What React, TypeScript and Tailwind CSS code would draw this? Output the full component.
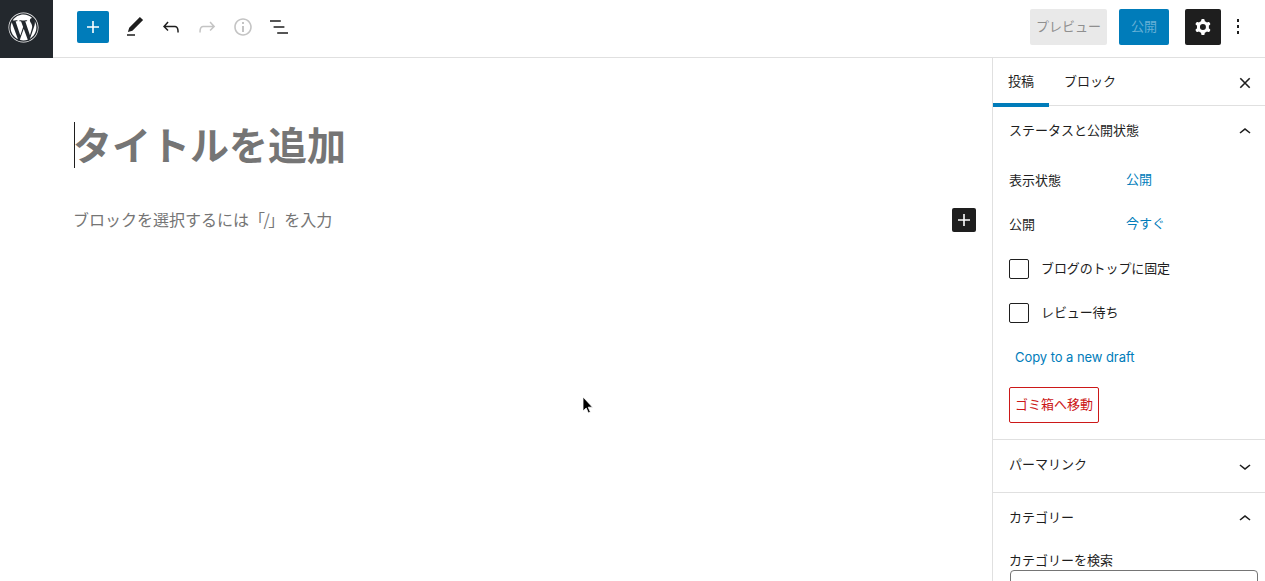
import { FaWordpress } from "react-icons/fa";

const font = { fontFamily: '"Noto Sans CJK JP", sans-serif' };

function Icon({ d, className, size = 24 }: { d: string; className?: string; size?: number }) {
  return (
    <svg viewBox="0 0 24 24" width={size} height={size} className={className} fill="currentColor">
      <path d={d} fillRule="evenodd" />
    </svg>
  );
}

const plus = "M18 11.2h-5.2V6h-1.6v5.2H6v1.6h5.2V18h1.6v-5.2H18z";
const up = "M6.5 12.4L12 8l5.5 4.4-.9 1.2L12 10l-4.5 3.6-1-1.2z";
const down = "M17.5 11.6L12 16l-5.5-4.4.9-1.2L12 14l4.5-3.6 1 1.2z";

function SectionHead({ label, open }: { label: string; open?: boolean }) {
  return (
    <div className="flex items-center justify-between h-[52px] pl-4 pr-2 text-[13px] text-[#1e1e1e]">
      <span className="-mt-[5px]">{label}</span>
      <Icon d={open ? up : down} className={open ? "-mt-[1px]" : ""} />
    </div>
  );
}

function Row({ label, value }: { label: string; value: string }) {
  return (
    <div className="flex items-center h-[44px] text-[13px]">
      <span className="w-[118px] text-[#1e1e1e] -mt-[2px]">{label}</span>
      <span className="text-[#007cba] -mt-[4px] -ml-[1px]">{value}</span>
    </div>
  );
}

function Check({ label }: { label: string }) {
  return (
    <div className="flex items-center h-[44px] text-[13px] text-[#1e1e1e]">
      <span className="w-[20px] h-[20px] border border-[#1e1e1e] rounded-[2px] bg-white" />
      <span className="ml-[12px] -mt-[2px] tracking-[-0.1px]">{label}</span>
    </div>
  );
}

export default function App() {
  return (
    <div className="relative w-[1265px] h-[581px] overflow-hidden bg-white flex flex-col" style={font}>
      <header className="flex items-center h-[58px] shrink-0 border-b border-[#e0e0e0]">
        <div className="w-[53px] h-[58px] bg-[#23282d] flex items-center justify-center text-white">
          <FaWordpress size={31} className="-mt-[3px] -ml-[6px]" />
        </div>
        <div className="flex items-center ml-[24px] -mt-[4px]">
          <div className="w-[32px] h-[32px] rounded-[2px] bg-[#007cba] text-white flex items-center justify-center">
            <Icon d={plus} />
          </div>
          <Icon d="M20.1 5.1L16.9 2 6.2 12.7l-1.3 4.4 4.5-1.3L20.1 5.1zM4 20.8h8v-1.5H4v1.5z" className="ml-[14px] text-[#1e1e1e]" />
          <Icon d="M18.3 11.7c-.6-.6-1.4-.9-2.3-.9H6.7l2.9-3.3-1.1-1-4.5 5L8.5 16l1-1-2.7-2.7H16c.5 0 .9.2 1.3.5 1 1 1 3.4 1 4.5v.3h1.5v-.2c0-1.5 0-4.3-1.5-5.7z" className="ml-[12px] text-[#1e1e1e]" />
          <Icon d="M15.6 6.5l-1.1 1 2.9 3.3H8c-.9 0-1.7.3-2.3.9-1.4 1.5-1.4 4.2-1.4 5.6v.2h1.5v-.3c0-1.1 0-3.5 1-4.5.3-.3.7-.5 1.3-.5h9.2L14.5 15l1.1 1.1 4.6-4.6-4.6-5z" className="ml-[12px] text-[#c4c4c4]" />
          <Icon d="M12 3.2c-4.8 0-8.8 3.9-8.8 8.8 0 4.8 3.9 8.8 8.8 8.8 4.8 0 8.8-3.9 8.8-8.8 0-4.8-4-8.8-8.8-8.8zm0 16c-4 0-7.2-3.3-7.2-7.2C4.8 8 8 4.8 12 4.8s7.2 3.3 7.2 7.2c0 4-3.2 7.2-7.2 7.2zM11 17h2v-6h-2v6zm0-8h2V7h-2v2z" className="ml-[12px] text-[#c4c4c4]" />
          <Icon d="M13.8 5.2H3v1.5h10.8V5.2zm-3.6 12v1.5H21v-1.5H10.2zm7.2-6H6.6v1.5h10.8v-1.5z" className="ml-[12px] text-[#1e1e1e]" />
        </div>
        <div className="ml-auto flex items-center -mt-[4px]">
          <div className="w-[77px] h-[36px] rounded-[2px] bg-[#e9e9e9] text-[#8f8f8f] text-[13px] flex items-center justify-center"><span className="-mt-[2px]">プレビュー</span></div>
          <div className="ml-[12px] w-[50px] h-[36px] rounded-[2px] bg-[#007cba] text-[#66b0d6] text-[13px] flex items-center justify-center"><span className="-mt-[2px]">公開</span></div>
          <div className="ml-[16px] w-[36px] h-[36px] rounded-[2px] bg-[#1e1e1e] text-white flex items-center justify-center">
            <svg viewBox="0 0 24 24" width="24" height="24" fill="currentColor">
              <path fillRule="evenodd" clipRule="evenodd" d="M10.289 4.836A1 1 0 0111.275 4h1.306a1 1 0 01.987.836l.244 1.466c.787.26 1.503.679 2.108 1.218l1.393-.522a1 1 0 011.216.437l.653 1.13a1 1 0 01-.23 1.273l-1.148.944a6.025 6.025 0 010 2.435l1.149.946a1 1 0 01.23 1.272l-.653 1.13a1 1 0 01-1.216.437l-1.394-.522c-.605.54-1.32.958-2.108 1.218l-.244 1.466a1 1 0 01-.987.836h-1.306a1 1 0 01-.986-.836l-.244-1.466a5.995 5.995 0 01-2.108-1.218l-1.394.522a1 1 0 01-1.217-.436l-.653-1.131a1 1 0 01.23-1.272l1.149-.946a6.026 6.026 0 010-2.435l-1.148-.944a1 1 0 01-.23-1.272l.653-1.131a1 1 0 011.217-.437l1.393.522a5.994 5.994 0 012.108-1.218l.244-1.466zM14.929 12a3 3 0 11-6 0 3 3 0 016 0z" />
            </svg>
          </div>
          <div className="ml-[5px] mr-[15px] w-[24px] flex flex-col items-center gap-[3.5px]">
            <span className="w-[2.5px] h-[2.5px] bg-[#1e1e1e]" />
            <span className="w-[2.5px] h-[2.5px] bg-[#1e1e1e]" />
            <span className="w-[2.5px] h-[2.5px] bg-[#1e1e1e]" />
          </div>
        </div>
      </header>

      <div className="flex flex-1 min-h-0">
        <main className="flex-1 min-w-0 pl-[73px] pr-[16px]">
          <div className="mt-[64px] h-[46px] flex items-center border-l border-[#1e1e1e] ml-[1px]">
            <h1 className="text-[39px] leading-[46px] font-bold text-[#757575] whitespace-nowrap -mt-[5px] -ml-[2px]">タイトルを追加</h1>
          </div>
          <div className="mt-[40px] flex items-center justify-between h-[24px]">
            <p className="text-[16px] text-[#757575] -mt-[2px]">ブロックを選択するには「<span className="-mx-[1.5px]">/</span>」を入力</p>
            <div className="w-[24px] h-[24px] rounded-[2px] bg-[#1e1e1e] text-white flex items-center justify-center">
              <Icon d={plus} />
            </div>
          </div>
        </main>

        <aside className="w-[273px] shrink-0 border-l border-[#e0e0e0]">
          <div className="flex items-center h-[48px] border-b border-[#e0e0e0] text-[13px] text-[#1e1e1e]">
            <div className="relative w-[56px] h-[48px] flex items-center justify-center">
              <span className="-mt-[2px]">投稿</span>
              <span className="absolute left-0 right-0 bottom-[-1px] h-[4px] bg-[#007cba]" />
            </div>
            <div className="w-[82px] flex items-center justify-center -mt-[2px]">ブロック</div>
            <svg viewBox="0 0 12 12" width="12" height="12" className="ml-auto mr-[14px] mt-[2px] text-[#1e1e1e]" fill="none" stroke="currentColor" strokeWidth="1.6">
              <path d="M1.3 1.3 10.7 10.7M10.7 1.3 1.3 10.7" />
            </svg>
          </div>

          <section className="border-b border-[#e0e0e0] h-[334px]">
            <SectionHead label="ステータスと公開状態" open />
            <div className="pl-4 pt-[1px]">
              <Row label="表示状態" value="公開" />
              <Row label="公開" value="今すぐ" />
              <Check label="ブログのトップに固定" />
              <Check label="レビュー待ち" />
              <div className="h-[44px] flex items-center pl-[6px] text-[13px] tracking-[-0.06px] text-[#007cba]" style={{ fontFamily: 'Inter, "Noto Sans CJK JP", sans-serif' }}><span className="mt-[1px]">Copy to a new draft</span></div>
              <div className="mt-[8px] w-[90px] h-[36px] rounded-[2px] border border-[#cc1818] text-[#cc1818] text-[13px] flex items-center justify-center"><span className="-mt-[2px]">ゴミ箱へ移動</span></div>
            </div>
          </section>

          <section className="border-b border-[#e0e0e0]">
            <SectionHead label="パーマリンク" />
          </section>

          <section>
            <SectionHead label="カテゴリー" open />
            <div className="pl-4 pr-[7px] pt-[6px] text-[13px] text-[#1e1e1e]">
              <div className="leading-[18px]">カテゴリーを検索</div>
              <div className="mt-[1px] ml-[1px] h-[30px] border border-[#757575] rounded-[4px] bg-white" />
            </div>
          </section>
        </aside>
      </div>

      <svg viewBox="0 0 14 20" width="14" height="20" className="absolute left-[581px] top-[396px]">
        <path d="M2 1v14l3.2-3 2.2 5 2-.9-2.2-4.9H11.5z" fill="#000" stroke="#fff" strokeWidth="0.8" />
      </svg>
    </div>
  );
}
